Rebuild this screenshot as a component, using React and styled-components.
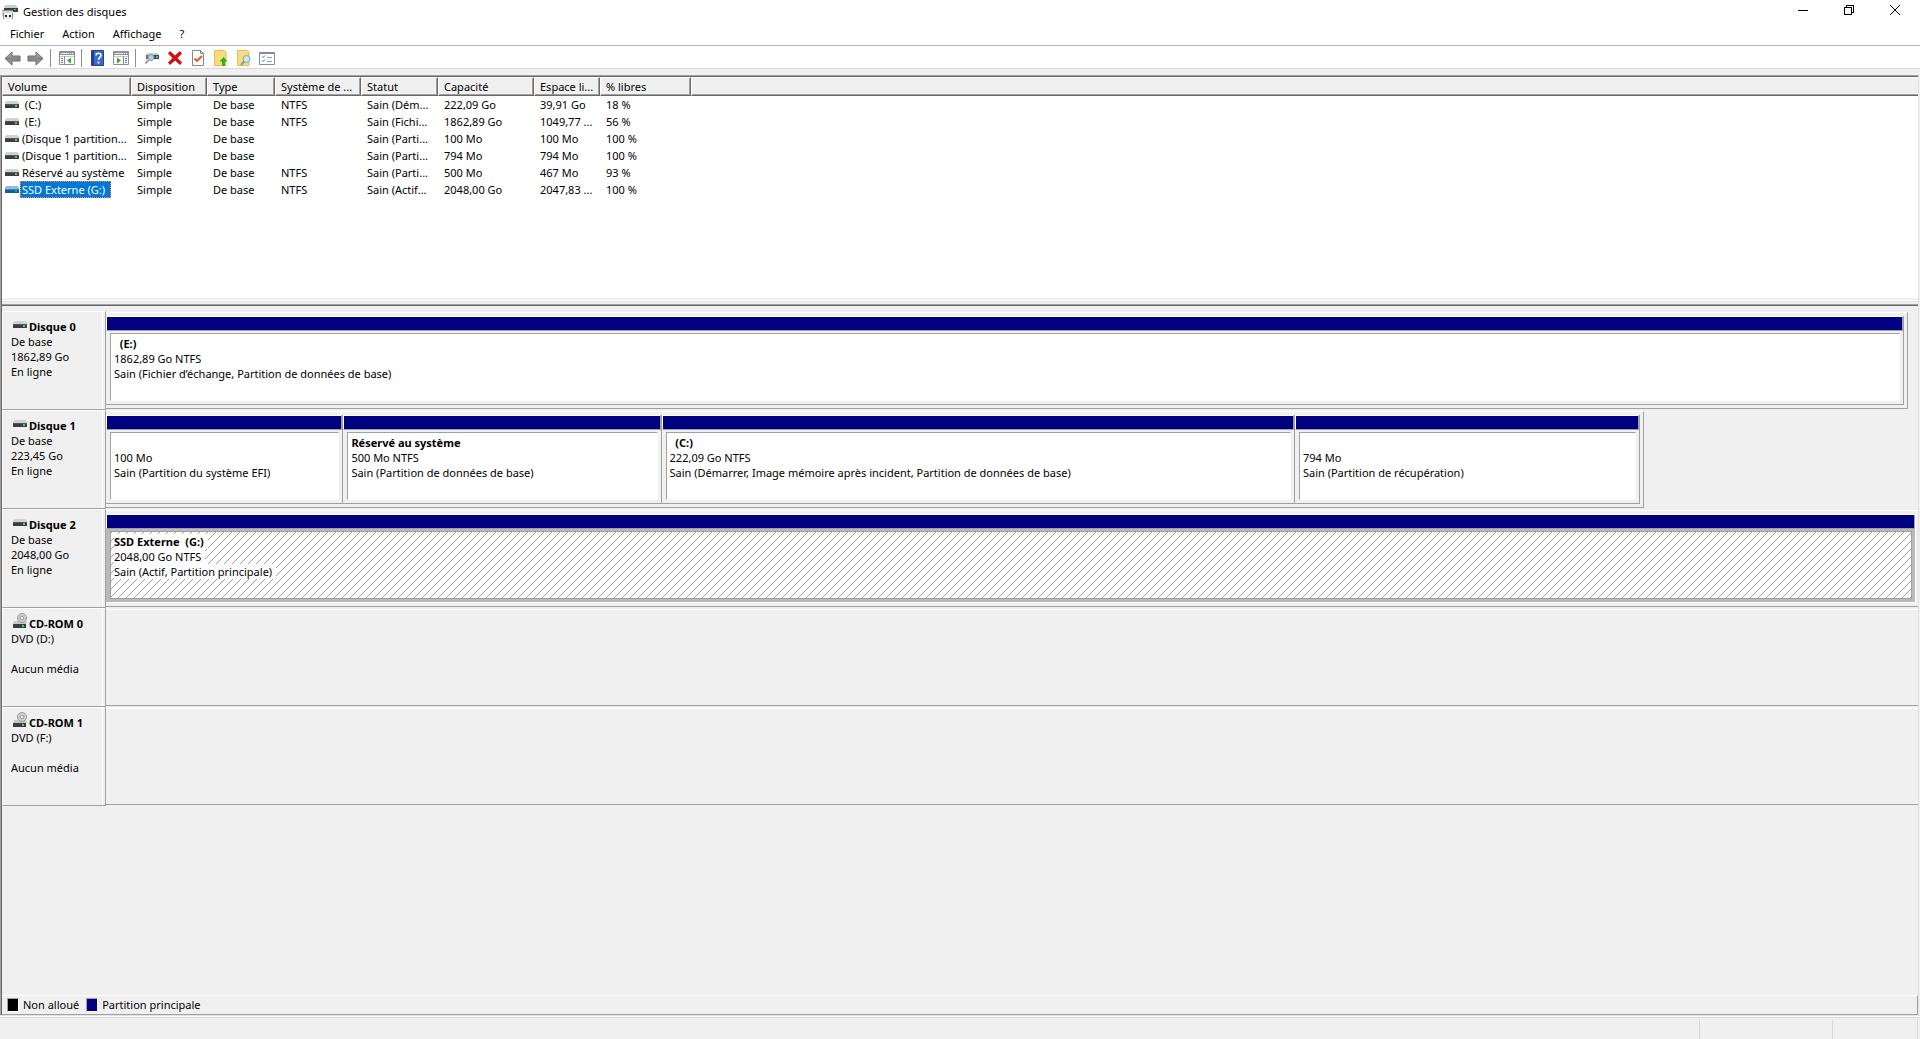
import { useState } from "react";
import styled, { createGlobalStyle, css } from "styled-components";

const volumes = [
  { name: "\u00a0(C:)", fs: "NTFS", status: "Sain (Dém...", size: "222,09 Go", free: "39,91 Go", percent: "18 %" },
  { name: "\u00a0(E:)", fs: "NTFS", status: "Sain (Fichi...", size: "1862,89 Go", free: "1049,77 ...", percent: "56 %" },
  { name: "(Disque 1 partition...", fs: "", status: "Sain (Parti...", size: "100 Mo", free: "100 Mo", percent: "100 %" },
  { name: "(Disque 1 partition...", fs: "", status: "Sain (Parti...", size: "794 Mo", free: "794 Mo", percent: "100 %" },
  { name: "Réservé au système", fs: "NTFS", status: "Sain (Parti...", size: "500 Mo", free: "467 Mo", percent: "93 %" },
  { name: "SSD Externe (G:)", fs: "NTFS", status: "Sain (Actif...", size: "2048,00 Go", free: "2047,83 ...", percent: "100 %" },
];

const columns = [
  { label: "Volume", width: 129 },
  { label: "Disposition", width: 76 },
  { label: "Type", width: 68 },
  { label: "Système de ...", width: 86 },
  { label: "Statut", width: 77 },
  { label: "Capacité", width: 96 },
  { label: "Espace li...", width: 66 },
  { label: "% libres", width: 91 },
];

const disks = [
  {
    name: "Disque 0",
    lines: ["De base", "1862,89 Go", "En ligne"],
    span: 99.45,
    partitions: [
      {
        title: "\u00a0\u00a0(E:)",
        size: "1862,89 Go NTFS",
        status: "Sain (Fichier d’échange, Partition de données de base)",
        weight: 1,
      },
    ],
  },
  {
    name: "Disque 1",
    lines: ["De base", "223,45 Go", "En ligne"],
    span: 84.88,
    partitions: [
      { title: "", size: "100 Mo", status: "Sain (Partition du système EFI)", weight: 237 },
      { title: "Réservé au système", size: "500 Mo NTFS", status: "Sain (Partition de données de base)", weight: 318 },
      {
        title: "\u00a0\u00a0(C:)",
        size: "222,09 Go NTFS",
        status: "Sain (Démarrer, Image mémoire après incident, Partition de données de base)",
        weight: 634,
      },
      { title: "", size: "794 Mo", status: "Sain (Partition de récupération)", weight: 345 },
    ],
  },
  {
    name: "Disque 2",
    lines: ["De base", "2048,00 Go", "En ligne"],
    span: 100,
    partitions: [
      {
        title: "SSD Externe\u00a0\u00a0(G:)",
        size: "2048,00 Go NTFS",
        status: "Sain (Actif, Partition principale)",
        weight: 1,
        selected: true,
      },
    ],
  },
  { name: "CD-ROM 0", lines: ["DVD (D:)", "\u00a0", "Aucun média"], optical: true },
  { name: "CD-ROM 1", lines: ["DVD (F:)", "\u00a0", "Aucun média"], optical: true },
];

export default function App() {
  const [selected, setSelected] = useState(5);

  return (
    <Window>
      <GlobalStyle />
      <TitleBar>
        <AppIcon />
        <Title>Gestion des disques</Title>
        <WindowButton aria-label="Réduire">
          <svg width="10" height="10" shapeRendering="crispEdges">
            <path d="M0 5h10v1H0z" />
          </svg>
        </WindowButton>
        <WindowButton aria-label="Restaurer">
          <svg width="10" height="10" fill="none" stroke="#000" shapeRendering="crispEdges">
            <path d="M.5 2.5h7v7h-7zM2.5 2.5v-2h7v7h-2" />
          </svg>
        </WindowButton>
        <WindowButton aria-label="Fermer">
          <svg width="10" height="10" stroke="#000">
            <path d="M0 0l10 10M10 0L0 10" />
          </svg>
        </WindowButton>
      </TitleBar>

      <MenuBar>
        <MenuItem>Fichier</MenuItem>
        <MenuItem>Action</MenuItem>
        <MenuItem>Affichage</MenuItem>
        <MenuItem>?</MenuItem>
      </MenuBar>

      <Toolbar>
        <Tool aria-label="Précédent"><ArrowIcon /></Tool>
        <Tool aria-label="Suivant"><ArrowIcon flip /></Tool>
        <Separator />
        <Tool aria-label="Arborescence de la console"><PaneIcon /></Tool>
        <Separator />
        <Tool aria-label="Aide"><HelpIcon /></Tool>
        <Tool aria-label="Volet Actions"><PaneIcon flip /></Tool>
        <Separator />
        <Tool aria-label="Analyser les disques"><RescanIcon /></Tool>
        <Tool aria-label="Supprimer"><DeleteIcon /></Tool>
        <Tool aria-label="Propriétés"><CheckPageIcon /></Tool>
        <Tool aria-label="Ouvrir"><FolderIcon /></Tool>
        <Tool aria-label="Explorer"><FolderIcon search /></Tool>
        <Tool aria-label="Options"><ListIcon /></Tool>
      </Toolbar>

      <Frame>
        <VolumePane>
          <VolumeTable>
            <colgroup>
              {columns.map((c) => (
                <Col key={c.label} $width={c.width} />
              ))}
              <col />
            </colgroup>
            <thead>
              <tr>
                {columns.map((c) => (
                  <HeadCell key={c.label} scope="col">{c.label}</HeadCell>
                ))}
                <HeadFiller />
              </tr>
            </thead>
            <tbody>
              {volumes.map((v, i) => (
                <tr key={i} onClick={() => setSelected(i)}>
                  <Cell>
                    <VolumeName>
                      <DriveIcon selected={i === selected} />
                      <VolumeText $selected={i === selected}>{v.name}</VolumeText>
                    </VolumeName>
                  </Cell>
                  <Cell>Simple</Cell>
                  <Cell>De base</Cell>
                  <Cell>{v.fs}</Cell>
                  <Cell>{v.status}</Cell>
                  <Cell>{v.size}</Cell>
                  <Cell>{v.free}</Cell>
                  <Cell>{v.percent}</Cell>
                  <Cell />
                </tr>
              ))}
            </tbody>
          </VolumeTable>
        </VolumePane>
        <Splitter />

        <DiskPane>
          {disks.map((d) => (
            <DiskRow key={d.name}>
              <DiskLabel>
                <DiskName $optical={d.optical}>
                  {d.optical ? <OpticalIcon /> : <DriveIcon />}
                  {d.name}
                </DiskName>
                {d.lines.map((line) => (
                  <TextLine key={line}>{line}</TextLine>
                ))}
              </DiskLabel>
              <DiskTrack>
                {d.partitions ? (
                  <DiskGraph $span={d.span}>
                    {d.partitions.map((p) => (
                      <Partition key={p.size} $weight={p.weight} $selected={p.selected}>
                        <Strip />
                        <PartitionBox $selected={p.selected}>
                          <PartitionTitle>{p.title}</PartitionTitle>
                          <TextLine>{p.size}</TextLine>
                          <TextLine>{p.status}</TextLine>
                        </PartitionBox>
                      </Partition>
                    ))}
                  </DiskGraph>
                ) : (
                  <EmptyGraph />
                )}
              </DiskTrack>
            </DiskRow>
          ))}
        </DiskPane>

        <Legend>
          <Swatch $color="#000000" />
          <LegendText>Non alloué</LegendText>
          <Swatch $color="#000080" />
          <LegendText>Partition principale</LegendText>
        </Legend>
      </Frame>

      <StatusBar>
        <StatusMain />
        <StatusCell $width={133} />
        <StatusCell $width={85} />
      </StatusBar>
    </Window>
  );
}

function AppIcon() {
  return (
    <svg width="16" height="16" viewBox="0 0 16 16">
      <path d="M3 1h11l2 3H2z" fill="#c9ccd0" />
      <path d="M2 4h14v4H2z" fill="#3a3d40" />
      <path d="M12 5h2v1h-2z" fill="#38d84a" />
      <path d="M0 6h11v6H0z" fill="#d4d6d9" />
      <path d="M0 6h11v1H0z" fill="#8f9295" />
      <path d="M1 9h10v6H1z" fill="#f2f2f2" />
      <path d="M1 9h1v6H1zM10 9h1v6h-1z" fill="#85878a" />
      <path d="M3 11h2v2H3zM7 11h2v2H7z" fill="#222" />
    </svg>
  );
}

function ArrowIcon({ flip }) {
  return (
    <svg width="17" height="15" viewBox="0 0 17 15">
      <defs>
        <linearGradient id="arrow" x1="0" y1="0" x2="0" y2="1">
          <stop offset="0" stopColor="#c4c4c4" />
          <stop offset="0.5" stopColor="#858585" />
          <stop offset="1" stopColor="#a4a4a4" />
        </linearGradient>
      </defs>
      <path
        d="M1 7.500L8 1v4h8v5H8v4z"
        fill="url(#arrow)"
        stroke="#6a6a6a"
        strokeLinejoin="round"
        transform={flip ? "matrix(-1 0 0 1 17 0)" : undefined}
      />
    </svg>
  );
}

function PaneIcon({ flip }) {
  return (
    <svg width="16" height="14" viewBox="0 0 16 14">
      <path d="M.5.5h15v13H.5z" fill="#fff" stroke="#8b9097" />
      <path d="M1 1h14v3H1z" fill="#8b959f" />
      <path d="M2 2h8v1H2z" fill="#e4e8ec" />
      <path d="M11 2h1v1h-1zM13 2h1v1h-1z" fill="#fff" />
      <g transform={flip ? "matrix(-1 0 0 1 16 0)" : undefined}>
        <path d="M1 5h14v1H1z" fill="#c3c8ce" />
        <path d="M5.500 5v8" stroke="#8b9097" />
        <path d="M2 7h2v1H2zM2 9h2v1H2zM2 11h2v1H2z" fill="#4d78a8" />
        <path d="M12 6.500v6L8 9.500z" fill="#3aa62e" />
      </g>
    </svg>
  );
}

function HelpIcon() {
  return (
    <svg width="14" height="16" viewBox="0 0 14 16">
      <path d="M.5.5h12v15H.5z" fill="#3a68d0" stroke="#23408f" />
      <path d="M1 1h2v14H1z" fill="#1f3f9a" />
      <path d="M5 5.500c0-3 5-3 5-.3 0 2.200-2.500 2-2.500 4.500M7.500 11.500v2" fill="none" stroke="#fff" strokeWidth="1.600" />
    </svg>
  );
}

function RescanIcon() {
  return (
    <svg width="16" height="14" viewBox="0 0 16 14">
      <path d="M3 2h11l1 2H2z" fill="#cdd0d3" />
      <path d="M2 4h13v4H2z" fill="#6b7074" />
      <path d="M10 4h5v4h-5z" fill="#3f4346" />
      <path d="M12 5h2v2h-2z" fill="#3ade4c" />
      <circle cx="7" cy="6.500" r="3" fill="#b4cde2" stroke="#7d98af" />
      <path d="M4.500 9L1.500 12.500" stroke="#8a949c" strokeWidth="1.800" />
    </svg>
  );
}

function DeleteIcon() {
  return (
    <svg width="14" height="14" viewBox="0 0 14 14">
      <path d="M2 0l5 4.500L12 0l2 2.500L9.500 7l4.500 4.500-2 2.500-5-4.500L2 14l-2-2.500L4.500 7 0 2.500z" fill="#d40f14" />
    </svg>
  );
}

function CheckPageIcon() {
  return (
    <svg width="12" height="16" viewBox="0 0 12 16">
      <path d="M.5.5h8l3 3v12H.5z" fill="#fdfdfd" stroke="#85878a" />
      <path d="M8.500.5v3h3" fill="none" stroke="#85878a" />
      <path d="M2.500 8.500l2.500 2.500 5-5" fill="none" stroke="#e2561f" strokeWidth="1.800" />
    </svg>
  );
}

function FolderIcon({ search }) {
  return (
    <svg width="14" height="16" viewBox="0 0 14 16">
      <path d="M.5.5H10l2 1.500v13.500H.5z" fill="#fbdc7c" stroke="#e3bd55" />
      {search ? (
        <>
          <circle cx="9.500" cy="9" r="3.500" fill="#cfe6f5" stroke="#7f9fb8" />
          <path d="M7 11.500L4 15" stroke="#8b9aa6" strokeWidth="2" />
        </>
      ) : (
        <path d="M9.500 7l4 4.500H11V16H8v-4.500H5.500z" fill="#2bb41f" />
      )}
    </svg>
  );
}

function ListIcon() {
  return (
    <svg width="16" height="13" viewBox="0 0 16 13">
      <path d="M.5.5h15v12H.5z" fill="#fff" stroke="#868c92" />
      <path d="M1 1h14v1H1z" fill="#868c92" />
      <path d="M3 4.500l1 1 2-2M3 8.500l1 1 2-2" fill="none" stroke="#2f7cc4" />
      <path d="M8 5h5v1H8zM8 9h5v1H8z" fill="#9a9fa4" />
    </svg>
  );
}

function DriveIcon({ selected }) {
  return (
    <svg width="14" height="7" viewBox="0 0 14 7" shapeRendering="crispEdges">
      <path d="M1 0h12v1h1v2H0V1h1z" fill={selected ? "#8fbde6" : "#d0d2d6"} />
      <path d="M0 3h14v4H0z" fill={selected ? "#1d5c93" : "#3b3e41"} />
      <path d="M0 3h14v1H0z" fill={selected ? "#3b86c8" : "#54575a"} />
      <path d="M10 4h2v2h-2z" fill={selected ? "#14a08a" : "#36e04a"} />
    </svg>
  );
}

function OpticalIcon() {
  return (
    <svg width="14" height="15" viewBox="0 0 14 15">
      <path d="M1 8h12l1 3H0z" fill="#c6c8ca" />
      <circle cx="9" cy="5" r="4.500" fill="#cfd1d3" stroke="#96989b" />
      <circle cx="9" cy="5" r="1.800" fill="#f4f4f4" stroke="#96989b" />
      <path d="M0 11h13v4H0z" fill="#3b3e41" />
      <path d="M9 12h2v2H9z" fill="#36e04a" />
    </svg>
  );
}

const GlobalStyle = createGlobalStyle`
  body {
    margin: 0;
    background: #f0f0f0;
  }
  *,
  *::before,
  *::after {
    box-sizing: border-box;
  }
  svg {
    display: block;
    flex: none;
  }
`;

const hatch =
  "url(\"data:image/svg+xml,%3Csvg xmlns='http://www.w3.org/2000/svg' width='8' height='8' shape-rendering='crispEdges'%3E%3Cpath fill='%23a0a0a0' d='M0 0h1v1H0zM7 1h1v1H7zM6 2h1v1H6zM5 3h1v1H5zM4 4h1v1H4zM3 5h1v1H3zM2 6h1v1H2zM1 7h1v1H1z'/%3E%3C/svg%3E\")";

const Window = styled.div`
  min-height: 100vh;
  display: flex;
  flex-direction: column;
  background: #f0f0f0;
  color: #000000;
  font-family: "Segoe UI", "Noto Sans", sans-serif;
  font-size: 11px;
  line-height: 15px;
  white-space: nowrap;
  cursor: default;
`;

const TitleBar = styled.header`
  height: 23px;
  padding: 0 2px;
  display: flex;
  align-items: center;
  background: #ffffff;
`;

const Title = styled.h1`
  flex: 1;
  margin: 0 0 0 5px;
  font-size: 11px;
  font-weight: 400;
`;

const WindowButton = styled.button`
  width: 46px;
  height: 20px;
  padding: 0;
  border: 0;
  display: flex;
  align-self: flex-start;
  align-items: center;
  justify-content: center;
  background: transparent;
`;

const MenuBar = styled.nav`
  height: 23px;
  padding: 0 1px 2px;
  display: flex;
  align-items: center;
  background: #ffffff;
  border-bottom: 1px solid #b4b4ba;
`;

const MenuItem = styled.button`
  height: 20px;
  padding: 0 9px;
  border: 0;
  background: transparent;
  color: inherit;
  font: inherit;
`;

const Toolbar = styled.div`
  height: 23px;
  padding-left: 1px;
  display: flex;
  align-items: center;
  background: #ffffff;
  border-bottom: 1px solid #d9d9d9;
`;

const Tool = styled.button`
  width: 23px;
  height: 22px;
  padding: 2px 0 0;
  border: 0;
  display: flex;
  align-items: center;
  justify-content: center;
  background: transparent;
`;

const Separator = styled.span`
  width: 1px;
  height: 18px;
  margin: 2px 4px 0 3px;
  background: #8d8d8d;
`;

const Frame = styled.main`
  flex: 1;
  margin: 6px 1px 0 0;
  display: flex;
  flex-direction: column;
  border: 1px solid #a0a0a0;
  border-right-color: #e3e3e3;
  border-bottom: 0;
  box-shadow: inset 1px 1px 0 #696969;
  padding: 1px 0 0 1px;
`;

const VolumePane = styled.section`
  min-height: 221px;
  background: #ffffff;
`;

const VolumeTable = styled.table`
  width: 100%;
  table-layout: fixed;
  border-collapse: separate;
  border-spacing: 0;
`;

const Col = styled.col`
  width: ${(props) => props.$width}px;
`;

const headEdge = css`
  height: 19px;
  border: 1px solid #ffffff;
  border-bottom-color: #696969;
  background: #f0f0f0;
`;

const HeadCell = styled.th`
  ${headEdge}
  padding: 0 0 0 5px;
  border-right-color: #696969;
  box-shadow: inset -1px -1px 0 #a0a0a0;
  font-weight: 400;
  text-align: left;
`;

const HeadFiller = styled.td`
  ${headEdge}
  border-right: 0;
  box-shadow: inset 0 -1px 0 #a0a0a0;
`;

const Cell = styled.td`
  height: 17px;
  padding: 0 0 0 6px;

  &:first-child {
    padding-left: 3px;
  }
`;

const VolumeName = styled.div`
  display: flex;
  align-items: center;
  gap: 1px;
`;

const VolumeText = styled.span`
  padding: 0 5px 0 1px;
  border: 1px dotted transparent;

  ${(props) =>
    props.$selected &&
    css`
      background: #0078d7;
      border-color: #ff8728;
      color: #ffffff;
    `}
`;

const Splitter = styled.div`
  height: 8px;
  border-top: 2px solid #f0f0f0;
  border-bottom: 1px solid #696969;
  box-shadow: inset 0 1px 0 #ffffff, inset 0 2px 0 #e3e3e3, inset 0 -1px 0 #a0a0a0;
`;

const DiskPane = styled.section`
  flex: 1;
  padding-top: 5px;
`;

const DiskRow = styled.div`
  height: 99px;
  display: flex;
`;

const DiskLabel = styled.div`
  width: 104px;
  padding: 7px 0 0 8px;
  border: 1px solid #a0a0a0;
  border-top-color: #ffffff;
  border-left-color: #ffffff;
  box-shadow: inset -2px 0 0 #f0f0f0, inset -3px 0 0 #ffffff;
`;

const DiskName = styled.div`
  height: 15px;
  padding-left: 2px;
  display: flex;
  align-items: flex-end;
  gap: 2px;
  font-weight: 700;

  svg {
    margin-bottom: ${(props) => (props.$optical ? 3 : 6)}px;
  }
`;

const TextLine = styled.div`
  width: fit-content;
`;

const DiskTrack = styled.div`
  flex: 1;
  min-width: 0;
  padding: 1px 0;
  display: flex;
`;

const DiskGraph = styled.div`
  width: ${(props) => props.$span}%;
  padding: 3px ${(props) => (props.$span < 100 ? 3 : 2)}px 3px 0;
  display: flex;
  border-top: 1px solid #ffffff;
  border-bottom: 1px solid #a0a0a0;
  border-right: ${(props) => (props.$span < 100 ? "1px solid #a0a0a0" : "0")};
`;

const EmptyGraph = styled.div`
  flex: 1;
  border-top: 1px solid #ffffff;
  border-bottom: 1px solid #a0a0a0;
`;

const Partition = styled.div`
  flex: ${(props) => props.$weight} 1 0;
  min-width: 0;
  display: flex;
  flex-direction: column;
  background: ${(props) => (props.$selected ? "#b9b9b9" : "#f0f0f0")};
  border: 0 solid ${(props) => (props.$selected ? "#ffffff" : "#a0a0a0")};
  border-width: 0 1px 1px 0;
`;

const Strip = styled.div`
  height: 15px;
  background: #000080;
  border: 1px solid #a0a0a0;
  border-top-color: #ffffff;
  border-left-color: #ffffff;
`;

const PartitionBox = styled.div`
  flex: 1;
  margin: 2px 3px 3px 4px;
  padding: 2px 0 0 3px;
  overflow: hidden;
  background: #ffffff;
  border: 1px solid #a0a0a0;
  border-right-color: #ffffff;
  border-bottom-color: #ffffff;

  ${(props) =>
    props.$selected &&
    css`
      background: ${hatch} padding-box #ffffff;
      border-color: #a0a0a0;

      ${TextLine} {
        padding-right: 4px;
        background: #ffffff;
      }
    `}
`;

const PartitionTitle = styled(TextLine)`
  min-height: 15px;
  font-weight: 700;
`;

const Legend = styled.footer`
  height: 20px;
  padding: 0 0 1px 5px;
  display: flex;
  align-items: center;
  border: 1px solid #a0a0a0;
  border-top-color: #ffffff;
  border-left: 0;
`;

const Swatch = styled.span`
  width: 12px;
  height: 14px;
  background: ${(props) => props.$color};
  border: 1px solid #ffffff;
  border-top-color: #a0a0a0;
  border-left-color: #a0a0a0;
`;

const LegendText = styled.span`
  margin: 0 7px 0 4px;
`;

const StatusBar = styled.div`
  height: 24px;
  padding: 1px 2px 0 0;
  display: flex;
  border-top: 1px solid #e3e3e3;
  box-shadow: inset 0 1px 0 #ffffff, inset 0 2px 0 #d7d7d7;
`;

const StatusMain = styled.div`
  flex: 1;
  margin-top: 3px;
  border-right: 1px solid #d7d7d7;
`;

const StatusCell = styled.div`
  width: ${(props) => props.$width}px;
  margin-top: 3px;
  border-right: 1px solid #d7d7d7;
`;
